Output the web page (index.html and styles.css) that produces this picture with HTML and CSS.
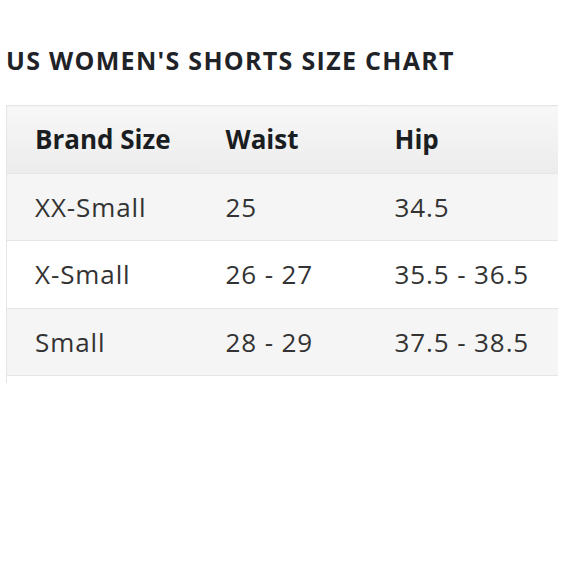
FILE: index.html
```html
<!DOCTYPE html>
<html>
<head>
<meta charset="utf-8">
<link rel="stylesheet" href="styles.css">
</head>
<body>
<div class="page">
  <h1 class="title">US WOMEN'S SHORTS SIZE CHART</h1>
  <div class="clip">
    <table class="chart">
      <thead>
        <tr><th class="c1">Brand Size</th><th class="c2">Waist</th><th class="c3">Hip</th></tr>
      </thead>
      <tbody>
        <tr class="odd"><td>XX-Small</td><td>25</td><td>34.5</td></tr>
        <tr><td>X-Small</td><td>26 - 27</td><td>35.5 - 36.5</td></tr>
        <tr class="odd"><td>Small</td><td>28 - 29</td><td>37.5 - 38.5</td></tr>
        <tr><td>&nbsp;</td><td>&nbsp;</td><td>&nbsp;</td></tr>
      </tbody>
    </table>
  </div>
</div>
</body>
</html>
```
FILE: styles.css
```css
html, body {
  margin: 0;
  padding: 0;
  background: #ffffff;
}
.page {
  padding: 44px 0 0 6px;
  font-family: "Open Sans", "DejaVu Sans", sans-serif;
}
.title {
  margin: 0;
  font-size: 25px;
  line-height: 32px;
  font-weight: 700;
  color: #1f2328;
  letter-spacing: 1.3px;
}
.clip {
  margin-top: 29px;
  width: 552px;
  height: 278px;
  overflow: hidden;
}
.chart {
  width: 552px;
  border-collapse: collapse;
  table-layout: fixed;
  font-size: 26px;
}
.chart th, .chart td {
  box-sizing: border-box;
  border: 1px solid #e6e6e6;
  border-left: none;
  border-right: none;
  height: 67.5px;
  padding: 0 0 0 28px;
  text-align: left;
  vertical-align: middle;
  line-height: 32px;
  white-space: nowrap;
}
.chart tr > :first-child { border-left: 1px solid #e6e6e6; }
.chart tr > :last-child { border-right: 1px solid #e6e6e6; }
.chart th {
  font-weight: 700;
  color: #1a1d21;
  background: linear-gradient(#f7f7f7, #ececec);
}
.chart td {
  color: #333333;
  background: #ffffff;
  letter-spacing: 0.9px;
}
.chart tr.odd td { background: #f5f5f5; }
.c1 { width: 191px; }
.c2 { width: 169px; }
.c3 { width: 192px; }
```
